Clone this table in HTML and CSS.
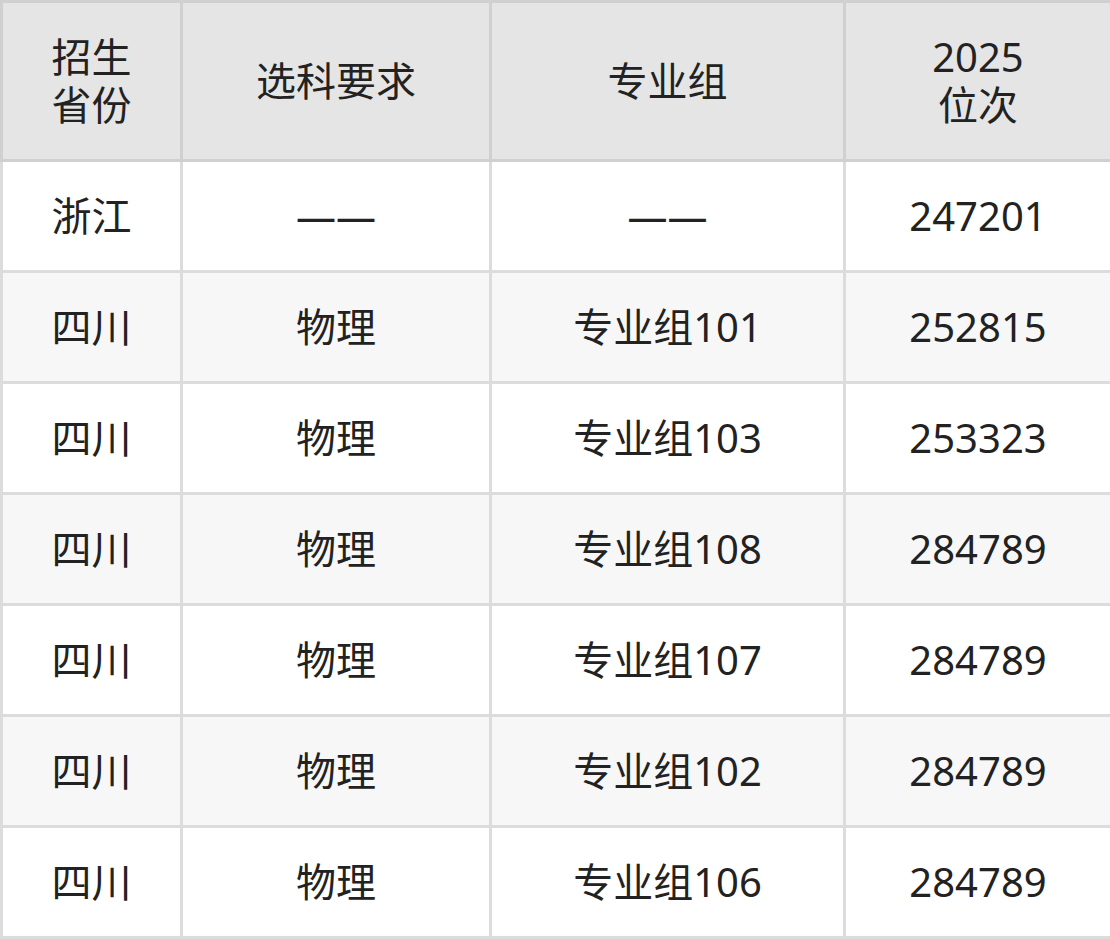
FILE: index.html
```html
<!DOCTYPE html>
<html lang="zh">
<head>
<meta charset="utf-8">
<link rel="stylesheet" href="styles.css">
</head>
<body>
<table class="rank">
  <colgroup>
    <col class="c1"><col class="c2"><col class="c3"><col class="c4">
  </colgroup>
  <thead>
    <tr><th>招生<br>省份</th><th>选科要求</th><th>专业组</th><th>2025<br>位次</th></tr>
  </thead>
  <tbody>
    <tr><td>浙江</td><td>——</td><td>——</td><td>247201</td></tr>
    <tr><td>四川</td><td>物理</td><td>专业组101</td><td>252815</td></tr>
    <tr><td>四川</td><td>物理</td><td>专业组103</td><td>253323</td></tr>
    <tr><td>四川</td><td>物理</td><td>专业组108</td><td>284789</td></tr>
    <tr><td>四川</td><td>物理</td><td>专业组107</td><td>284789</td></tr>
    <tr><td>四川</td><td>物理</td><td>专业组102</td><td>284789</td></tr>
    <tr><td>四川</td><td>物理</td><td>专业组106</td><td>284789</td></tr>
  </tbody>
</table>
</body>
</html>
```

FILE: styles.css
```css
html, body {
  margin: 0;
  padding: 0;
  background: #ffffff;
}
.rank {
  border-collapse: collapse;
  table-layout: fixed;
  width: 1110px;
  font-family: "Noto Sans", "Noto Sans CJK SC", sans-serif;
  font-size: 40px;
  line-height: 48px;
  color: #222222;
}
.c1 { width: 180px; }
.c2 { width: 309px; }
.c3 { width: 354px; }
.c4 { width: 267px; }
.rank th, .rank td {
  text-align: center;
  vertical-align: middle;
  padding: 0;
  font-weight: normal;
}
.rank th {
  height: 156px;
  background: #e5e5e5;
  border: 3px solid #d0d0d0;
}
.rank td {
  height: 108px;
  border: 3px solid #dcdcdc;
}
.rank tbody tr:nth-child(even) td {
  background: #f7f7f7;
}
```
